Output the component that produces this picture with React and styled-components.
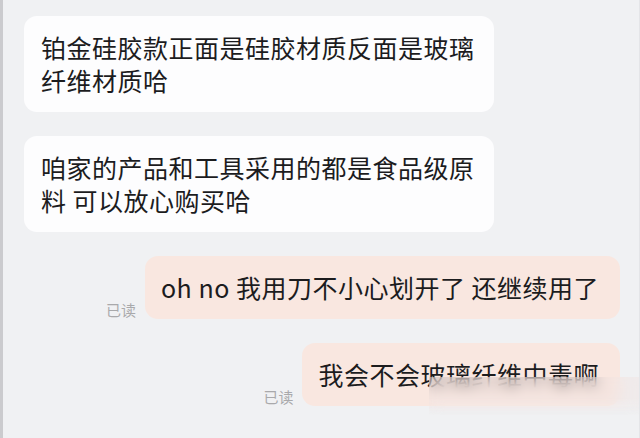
import React from 'react';
import styled, { createGlobalStyle } from 'styled-components';

const GlobalStyle = createGlobalStyle`
  html, body {
    margin: 0;
    padding: 0;
    background: #f0f1f3;
  }
  body {
    font-family: "Noto Sans CJK SC", "Noto Sans", sans-serif;
  }
`;

const Screen = styled.div`
  position: relative;
  width: 640px;
  height: 438px;
  box-sizing: border-box;
  overflow: hidden;
  background: #f0f1f3;
  border-left: 3px solid #cbcbce;
  border-right: 1px solid #e4e5e8;
  padding: 16px 19px 0 21px;
  display: flex;
  flex-direction: column;
  gap: 24px;
`;

const Row = styled.div`
  display: flex;
  align-items: flex-end;
  justify-content: ${props => (props.mine ? 'flex-end' : 'flex-start')};
  gap: 9px;
`;

const Bubble = styled.div`
  width: fit-content;
  box-sizing: border-box;
  padding: 15px ${props => (props.mine ? '21px' : '19px')} 15px
    ${props => (props.mine ? '16px' : '17px')};
  border-radius: 13px;
  background: ${props => (props.mine ? '#f9e7e0' : '#fdfdfe')};
  color: #1c1c1e;
  font-size: 25px;
  letter-spacing: 0.5px;
  line-height: 33px;
  white-space: nowrap;
`;

const ReadMark = styled.span`
  font-size: 15px;
  line-height: 16px;
  color: #a9a9ab;
  margin-bottom: 1px;
`;

const Smudge = styled.div`
  position: absolute;
  left: 426px;
  top: 377px;
  width: 214px;
  height: 38px;
  backdrop-filter: blur(7px);
  background: rgba(240, 226, 222, 0.4);
  -webkit-mask-image: linear-gradient(to bottom, #000 55%, transparent);
  mask-image: linear-gradient(to bottom, #000 55%, transparent);
`;

const messages = [
  { mine: false, lines: ['铂金硅胶款正面是硅胶材质反面是玻璃', '纤维材质哈'] },
  { mine: false, lines: ['咱家的产品和工具采用的都是食品级原', '料 可以放心购买哈'] },
  { mine: true, lines: ['oh no 我用刀不小心划开了 还继续用了'] },
  { mine: true, lines: ['我会不会玻璃纤维中毒啊'] }
];

export default () => (
  <>
    <GlobalStyle />
    <Screen>
      {messages.map((m, i) => (
        <Row key={i} mine={m.mine}>
          {m.mine && <ReadMark>已读</ReadMark>}
          <Bubble mine={m.mine}>
            {m.lines.map((l, j) => (
              <React.Fragment key={j}>
                {j > 0 && <br />}
                {l}
              </React.Fragment>
            ))}
          </Bubble>
        </Row>
      ))}
      <Smudge />
    </Screen>
  </>
);
